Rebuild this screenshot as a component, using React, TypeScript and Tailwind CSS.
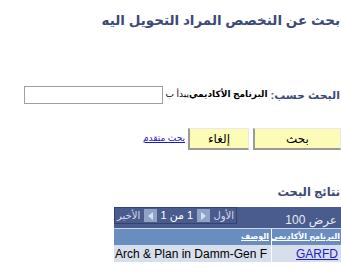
import React from "react";

const font = { fontFamily: '"Liberation Sans", "DejaVu Sans", Arial, sans-serif' };

export default function App() {
  return (
    <div dir="rtl" className="w-[341px] h-[275px] bg-white overflow-hidden relative whitespace-nowrap" style={font}>
      <div className="pr-[1px] pt-[11px] text-[13.5px] font-bold text-[#3d4a78] leading-[20px]">
        بحث عن النخصص المراد التحويل اليه
      </div>
      <div className="mt-[55px] flex items-center h-[18px]">
        <span className="text-[11px] font-bold text-[#3d4a78] pr-[1px] ml-[3px]">البحث حسب:</span>
        <span className="text-[9px] font-bold text-black">البرنامج الأكاديمي</span>
        <span className="text-[9px] text-black">يبدأ ب</span>
        <input className="mr-[3px] w-[139px] h-[18px] border border-[#a0a0a0] bg-white" />
      </div>
      <div className="mt-[24px] flex items-center h-[22px]">
        <button className="w-[88px] h-[22px] bg-[#fcfcb6] border-t border-r border-[#e8e8e8] border-b-2 border-l-2 border-b-[#9a9a9a] border-l-[#9a9a9a] text-[12px] text-black">
          بحث
        </button>
        <button className="mr-[4px] w-[61px] h-[22px] bg-[#fcfcb6] border-t border-r border-[#e8e8e8] border-b-2 border-l-2 border-b-[#9a9a9a] border-l-[#9a9a9a] text-[12px] text-black">
          إلغاء
        </button>
        <a className="mr-[3px] text-[9px] text-[#1a1acc] underline">بحث متقدم</a>
      </div>
      <div className="mt-[34px] pr-[1px] text-[11.5px] font-bold text-[#3d4a78] leading-[16px]">نتائج البحث</div>
      <div className="mt-[7px] w-[227px]">
        <div className="h-[21px] bg-[#4a5b8d] flex items-start">
          <div className="flex-1 flex items-center justify-start pr-[4px] h-[21px] text-[12px] text-[#e8ecf4] pt-[4px]">
            عرض 100
          </div>
          <div className="w-[123px] h-[17px] border border-[#33426e] flex items-center justify-between px-[2px] text-[10px] text-[#d8dcec]">
            <span>الأول</span>
            <span className="w-[13px] h-[13px] bg-[#8fa3c7] flex items-center justify-center">
              <svg width="5" height="8" viewBox="0 0 5 8"><path d="M0 0 L5 4 L0 8Z" fill="#d6e0ef" /></svg>
            </span>
            <span className="text-[11px] text-white">1 من 1</span>
            <span className="w-[13px] h-[13px] bg-[#8fa3c7] flex items-center justify-center">
              <svg width="5" height="8" viewBox="0 0 5 8"><path d="M5 0 L0 4 L5 8Z" fill="#d6e0ef" /></svg>
            </span>
            <span>الأخير</span>
          </div>
        </div>
        <div className="h-[1px] bg-[#d0d8e8]" />
        <div className="flex h-[16px] bg-[#6a8dbf] text-[8px] font-bold text-white">
          <div className="w-[70px] border-l border-white pr-[1px] flex items-center overflow-hidden"><span className="underline">البرنامج الأكاديمى</span></div>
          <div className="flex-1 pr-[2px] flex items-center"><span className="underline">الوصف</span></div>
        </div>
        <div className="flex h-[17px] bg-[#d6dfeb] text-[12px]">
          <div className="w-[70px] border-l border-white flex items-center justify-start pr-[3px]">
            <a className="text-[#2020c8] underline">GARFD</a>
          </div>
          <div className="flex-1 flex items-center justify-end pl-[1px] text-black overflow-hidden" dir="ltr">
            <span className="mr-auto">Arch &amp; Plan in Damm-Gen F</span>
          </div>
        </div>
      </div>
    </div>
  );
}
